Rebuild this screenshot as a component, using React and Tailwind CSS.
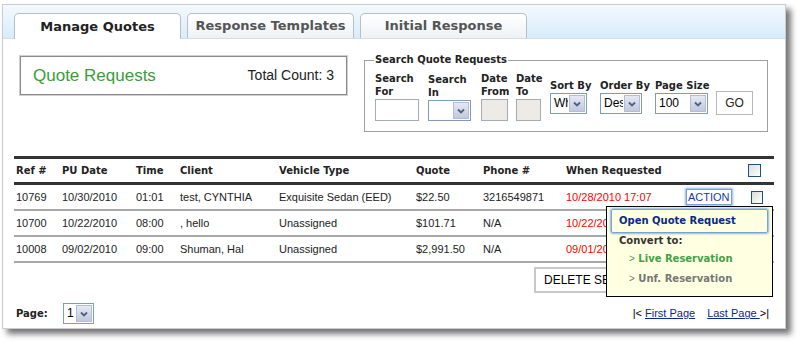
import React from 'react'

const sans = { fontFamily: '"Liberation Sans", Arial, sans-serif' }
const bold = { fontFamily: '"DejaVu Sans", Verdana, sans-serif' }

const rows = [
  { ref: '10769', date: '10/30/2010', time: '01:01', client: 'test, CYNTHIA', vehicle: 'Exquisite Sedan (EED)', quote: '$22.50', phone: '3216549871', when: '10/28/2010 17:07' },
  { ref: '10700', date: '10/22/2010', time: '08:00', client: ', hello', vehicle: 'Unassigned', quote: '$101.71', phone: 'N/A', when: '10/22/2010 10:12' },
  { ref: '10008', date: '09/02/2010', time: '09:00', client: 'Shuman, Hal', vehicle: 'Unassigned', quote: '$2,991.50', phone: 'N/A', when: '09/01/2010 16:45' },
]

function Tab({ label, active }) {
  return (
    <div
      className={`w-[167px] rounded-t-[5px] border border-b-0 border-[#b9bec4] flex items-center justify-center text-[13px] font-bold ${active ? 'bg-white text-[#222] h-[26px] -mb-px' : 'h-[25px] bg-gradient-to-b from-[#ffffff] to-[#eef2f5] text-[#555]'}`}
      style={bold}
    >
      {label}
    </div>
  )
}

function Select({ w, value }) {
  return (
    <div className={`h-[21px] border border-[#7f9db9] bg-white flex items-stretch ${w}`}>
      <span className="flex-1 overflow-hidden pl-[3px] text-[12px] font-normal leading-[19px] text-black whitespace-nowrap" style={sans}>{value}</span>
      <span className="w-[16px] m-[1px] bg-gradient-to-b from-[#e6e9f3] to-[#c2c8dc] border border-[#b4bdd7] flex items-center justify-center">
        <svg width="8" height="6" viewBox="0 0 8 6"><path d="M1 1.5 L4 4.5 L7 1.5" stroke="#4d6185" strokeWidth="1.8" fill="none" /></svg>
      </span>
    </div>
  )
}

function Box({ w, gray }) {
  return <div className={`h-[22px] border border-[#a5acb2] ${gray ? 'bg-[#ecebe6]' : 'bg-white'} ${w}`} />
}

export default function App() {
  return (
    <div className="w-[800px] h-[341px] bg-white overflow-hidden relative">
      <div className="mt-[4px] ml-[2px] w-[784px] h-[325px] bg-white border border-[#c9cdd1] shadow-[5px_5px_6px_rgba(0,0,0,0.55)] flex flex-col text-[#222]">
        <div className="h-[34px] bg-gradient-to-b from-[#f4f9fd] to-[#d7ecfb] flex items-end gap-[6px] pl-[11px] border-b border-[#d5dde3]">
          <Tab label="Manage Quotes" active />
          <Tab label="Response Templates" />
          <Tab label="Initial Response" />
        </div>

        <div className="flex pl-[16px] pt-[16px]">
          <div className="w-[329px] h-[41px] border-2 border-[#d0d0d0] outline outline-1 outline-[#8a8a8a] -outline-offset-2 flex items-center justify-between px-[12px]">
            <span className="text-[17px] text-[#3c9c3c]" style={sans}>Quote Requests</span>
            <span className="text-[14px] text-[#222]" style={sans}>Total Count: 3</span>
          </div>

          <fieldset className="ml-[16px] -mt-[1px] w-[404px] h-[78px] border border-[#a0a0a0] px-[10px] pt-[6px]">
            <legend className="text-[10px] font-bold px-[1px] -ml-[1px] leading-[12px]" style={bold}>Search Quote Requests</legend>
            <div className="flex items-end text-[10px] font-bold leading-[13px]" style={bold}>
              <div className="flex flex-col gap-[1px] w-[53px]">
                <span>Search<br />For</span>
                <Box w="w-[44px]" />
              </div>
              <div className="flex flex-col gap-[1px] w-[53px]">
                <span>Search<br />In</span>
                <Select w="w-[43px]" value="" />
              </div>
              <div className="flex flex-col gap-[1px] w-[35px]">
                <span>Date<br />From</span>
                <Box w="w-[27px]" gray />
              </div>
              <div className="flex flex-col gap-[1px] w-[34px]">
                <span>Date<br />To</span>
                <Box w="w-[25px]" gray />
              </div>
              <div className="flex flex-col gap-[1px] w-[50px] mb-[7px] leading-[12px]">
                <span>Sort By</span>
                <Select w="w-[37px]" value="When" />
              </div>
              <div className="flex flex-col gap-[1px] w-[55px] mb-[7px] leading-[12px]">
                <span>Order By</span>
                <Select w="w-[42px]" value="Desc" />
              </div>
              <div className="flex flex-col gap-[1px] w-[61px] mb-[7px] leading-[12px]">
                <span>Page Size</span>
                <Select w="w-[53px]" value="100" />
              </div>
              <div className="mb-[6px] w-[37px] h-[24px] border border-[#b8b8b8] bg-white flex items-center justify-center text-[12px] font-normal" style={sans}>GO</div>
            </div>
          </fieldset>
        </div>

        <div className="mx-[11px] mt-[24px] border-t-[3px] border-[#333] relative">
          <div className="h-[26px] flex items-center text-[10px] font-bold border-b-[3px] border-[#333]" style={bold}>
            <span className="w-[48px] pl-[2px]">Ref #</span>
            <span className="w-[74px]">PU Date</span>
            <span className="w-[44px]">Time</span>
            <span className="w-[99px]">Client</span>
            <span className="w-[137px]">Vehicle Type</span>
            <span className="w-[67px]">Quote</span>
            <span className="w-[83px]">Phone #</span>
            <span className="w-[182px]">When Requested</span>
            <span className="w-[13px] h-[13px] border border-[#1c5180] bg-gradient-to-br from-[#dcdcd7] to-white" />
          </div>
          {rows.map((r, i) => (
            <div key={r.ref} className="h-[26px] flex items-center text-[11px] border-b-2 border-[#a8a8a8]" style={sans}>
              <span className="w-[48px] pl-[2px]">{r.ref}</span>
              <span className="w-[74px]">{r.date}</span>
              <span className="w-[44px]">{r.time}</span>
              <span className="w-[99px]">{r.client}</span>
              <span className="w-[137px]">{r.vehicle}</span>
              <span className="w-[67px]">{r.quote}</span>
              <span className="w-[83px]">{r.phone}</span>
              <span className="w-[120px] text-[#ff0000] whitespace-nowrap">{r.when}</span>
              <span className="w-[64px]">
                {i === 0 && (
                  <span className="inline-block border border-[#7da2ce] shadow-[0_0_2px_1px_#8fb4e3] px-[1px] text-[#1b3ca0] text-[11px] leading-[14px]">ACTION</span>
                )}
              </span>
              <span className="ml-[1px] w-[12px] h-[13px] border border-[#1c5180] bg-gradient-to-br from-[#dcdcd7] to-white" />
            </div>
          ))}

          <div className="absolute left-[592px] top-[47px] w-[167px] h-[91px] bg-[#ffffe1] border border-black pt-[2px] px-[4px] text-[10px] font-bold leading-[12px]" style={bold}>
            <div className="h-[24px] border border-[#7da2ce] shadow-[0_0_2px_1px_#8fb4e3] rounded-[2px] flex items-center pl-[7px] text-[#0a2a8a]">Open Quote Request</div>
            <div className="pl-[8px] mt-[2px] text-[#333]">Convert to:</div>
            <div className="pl-[18px] mt-[6px] text-[#46a046]"><span className="font-normal" style={sans}>&gt;</span> Live Reservation</div>
            <div className="pl-[18px] mt-[8px] text-[#777]"><span className="font-normal" style={sans}>&gt;</span> Unf. Reservation</div>
          </div>
        </div>

        <div className="flex justify-end pr-[15px] mt-[4px]">
          <div className="w-[236px] h-[26px] border-2 border-[#c8c8c8] bg-white pl-[8px] text-[12px] flex items-center text-black" style={sans}>DELETE SELECTED</div>
        </div>

        <div className="flex items-center justify-between pl-[13px] pr-[16px] mt-[10px]" style={sans}>
          <div className="flex items-center">
            <span className="w-[47px] text-[10px] font-bold" style={bold}>Page:</span>
            <Select w="w-[31px]" value="1" />
          </div>
          <div className="text-[11px] text-black">
            |&lt; <span className="text-[#0a2a8a] underline">First Page</span>
            <span className="inline-block w-[12px]" />
            <span className="text-[#0a2a8a] underline">Last Page </span>&gt;|
          </div>
        </div>
      </div>
    </div>
  )
}
